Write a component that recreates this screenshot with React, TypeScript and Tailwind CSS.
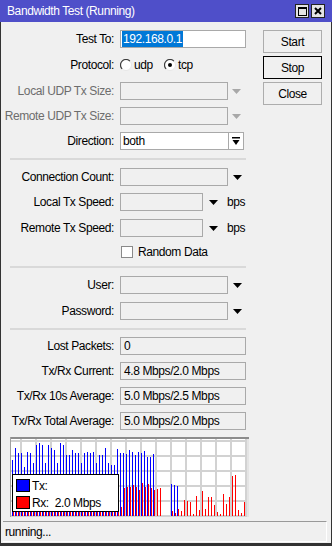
import React from "react";

const blueTops = [
  460, 448, 453, 453, 467, 452, 453, 463, 445, 443, 445, 463, 445, 448, 450, 463, 443, 445,
  455, 455, 450, 453, 453, 463, 453, 452, 453, 452, 463, 455, 455, 448, 463, 465, 465, 449,
  453, 453, 454, 450, 452, 455, 452, 453, 451, 457, 457, 454, 0, 0, 0, 0, 0, 484, 485, 486,
];

const redTops = [
  488, 487, 489, 486, 490, 487, 488, 489, 486, 487, 488, 490, 487, 486, 488, 489, 487, 488,
  486, 489, 487, 488, 490, 486, 487, 488, 489, 487, 486, 488, 487, 489, 488, 486, 487, 488,
  507, 488, 487, 487, 485, 487, 490, 483, 487, 484, 488, 490, 489, 488, 0, 0, 0, 511, 513,
  509, 511, 500, 501, 502, 514, 496, 510, 491, 509, 497, 497, 505, 512, 514, 494, 504, 497,
  476, 475, 510, 513, 502,
];

function Arrow({ gray }: { gray?: boolean }) {
  return (
    <svg width="9" height="5" viewBox="0 0 9 5">
      <path d="M0 0h9L4.5 5z" fill={gray ? "#a8a8a8" : "#000"} />
    </svg>
  );
}

function Radio({ checked }: { checked?: boolean }) {
  return (
    <svg width="12" height="12" viewBox="0 0 12 12">
      <circle cx="6" cy="6" r="5.5" fill="#fff" stroke="#e6e6e6" />
      <path d="M2.1 9.9A5.5 5.5 0 0 1 9.9 2.1" fill="none" stroke="#3c3c3c" strokeWidth="1.2" />
      {checked ? <circle cx="6" cy="6" r="2" fill="#000" /> : null}
    </svg>
  );
}

function Row({
  label,
  disabled,
  className,
  children,
}: {
  label: string;
  disabled?: boolean;
  className?: string;
  children?: React.ReactNode;
}) {
  return (
    <div className={`flex h-[18px] items-center ${className ?? ""}`}>
      <div
        className={`w-[113px] shrink-0 whitespace-nowrap text-right ${
          disabled ? "text-[#6d6d6d]" : "text-black"
        }`}
      >
        {label}
      </div>
      <div className="ml-[6px] flex h-full items-center">{children}</div>
    </div>
  );
}

function Box({ className }: { className: string }) {
  return <div className={`h-full border border-[#a9a9a9] bg-[#f0f0f0] ${className}`} />;
}

function ValueBox({ value }: { value: string }) {
  return (
    <div className="flex h-full w-[126px] items-center border border-[#a9a9a9] bg-[#f0f0f0] pl-[3px]">
      {value}
    </div>
  );
}

function Separator() {
  return <div className="ml-[9px] h-[2px] w-[236px] bg-[#d9d9d9]" />;
}

function Graph() {
  const grid = [];
  for (let k = 0; k < 16; k++) {
    grid.push(<rect key={`v${k}`} x={20 + 15 * k} y={439} width={2} height={78} fill="#d2d2d2" />);
  }
  for (let k = 0; k < 6; k++) {
    grid.push(<rect key={`h${k}`} x={11} y={440 + 15 * k} width={236} height={2} fill="#d2d2d2" />);
  }

  return (
    <div className="relative ml-[9px] mt-[7px] h-[80px] w-[239px]">
      <svg width="239" height="80" viewBox="10 437 239 80" shapeRendering="crispEdges">
        <rect x={10} y={437} width={237} height={80} fill="#fff" />
        {grid}
        {blueTops.map((top, i) =>
          top ? <rect key={`b${i}`} x={12 + 3 * i} y={top} width={1} height={516 - top} fill="#0000ff" /> : null
        )}
        {redTops.map((top, i) =>
          top ? <rect key={`r${i}`} x={13 + 3 * i} y={top} width={1} height={516 - top} fill="#ff0000" /> : null
        )}
        <rect x={10} y={437} width={239} height={2} fill="#8c8c8c" />
        <rect x={10} y={437} width={1} height={80} fill="#a0a0a0" />
        <rect x={247} y={439} width={2} height={78} fill="#e4e4e4" />
      </svg>

      <div className="absolute left-[2px] top-[37px] flex h-[38px] w-[107px] flex-col gap-[4px] border border-black bg-white pl-[3px] pt-[4px]">
        <div className="flex items-center">
          <div className="h-[13px] w-[14px] border border-black bg-[#0000ff]" />
          <span className="ml-[2px]">Tx:</span>
        </div>
        <div className="flex items-center">
          <div className="h-[13px] w-[14px] border border-black bg-[#ff0000]" />
          <span className="ml-[2px] whitespace-pre">Rx:  2.0 Mbps</span>
        </div>
      </div>
    </div>
  );
}

function Button({ label, focused }: { label: string; focused?: boolean }) {
  return (
    <div
      className={`flex h-[23px] w-[59px] items-center justify-center bg-[#f0f0f0] ${
        focused ? "border border-black" : "border border-[#adadad]"
      }`}
    >
      {label}
    </div>
  );
}

export default function App() {
  return (
    <div className="flex h-[546px] w-[332px] flex-col bg-[#f0f0f0] font-['Liberation_Sans',Arial,sans-serif] text-[12px] leading-none tracking-[-0.4px] text-black">
      <div className="flex h-[22px] shrink-0 items-center bg-[#4f4fc9] pl-[7px] pr-[7px] text-white">
        <span className="flex-1">Bandwidth Test (Running)</span>
        <div className="flex h-[14px] w-[14px] items-center justify-center border border-[#222] bg-[#e4e4e4]">
          <div className="h-[9px] w-[9px] border border-t-2 border-black" />
        </div>
        <div className="ml-[2px] flex h-[14px] w-[14px] items-center justify-center border border-[#222] bg-[#e4e4e4]">
          <svg width="8" height="8" viewBox="0 0 8 8">
            <path d="M1 1l6 6M7 1L1 7" stroke="#000" strokeWidth="2" />
          </svg>
        </div>
      </div>

      <div className="flex flex-1 flex-col border-x border-b-[3px] border-[#333]">
        <div className="flex">
          <div className="flex w-[249px] flex-col pt-[8px]">
            <Row label="Test To:">
              <div className="flex h-full w-[126px] items-center border border-[#a9a9a9] bg-white pl-[1px]">
                <span className="bg-[#0078d7] px-[1px] py-[2px] text-white">192.168.0.1</span>
              </div>
            </Row>

            <Row label="Protocol:" className="mt-[8px]">
              <div className="flex w-[44px] items-center">
                <Radio />
                <span className="ml-[2px]">udp</span>
              </div>
              <div className="flex items-center">
                <Radio checked />
                <span className="ml-[2px]">tcp</span>
              </div>
            </Row>

            <Row label="Local UDP Tx Size:" disabled className="mt-[8px]">
              <Box className="w-[108px]" />
              <div className="ml-[4px]">
                <Arrow gray />
              </div>
            </Row>

            <Row label="Remote UDP Tx Size:" disabled className="mt-[7px]">
              <Box className="w-[108px]" />
              <div className="ml-[4px]">
                <Arrow gray />
              </div>
            </Row>

            <Row label="Direction:" className="mt-[7px]">
              <div className="flex h-full w-[109px] items-center border border-[#a9a9a9] bg-white pl-[2px]">
                both
              </div>
              <div className="flex h-full w-[15px] items-center justify-center border border-l-0 border-[#a9a9a9] bg-white">
                <svg width="8" height="9" viewBox="0 0 8 9">
                  <rect x="0" y="0" width="8" height="1.5" fill="#000" />
                  <path d="M0.5 3h7L4 8z" fill="#000" />
                </svg>
              </div>
            </Row>

            <div className="mt-[8px]">
              <Separator />
            </div>

            <Row label="Connection Count:" className="mt-[8px]">
              <Box className="w-[108px]" />
              <div className="ml-[5px]">
                <Arrow />
              </div>
            </Row>

            <Row label="Local Tx Speed:" className="mt-[7px]">
              <Box className="w-[83px]" />
              <div className="ml-[6px]">
                <Arrow />
              </div>
              <span className="ml-[9px]">bps</span>
            </Row>

            <Row label="Remote Tx Speed:" className="mt-[8px]">
              <Box className="w-[83px]" />
              <div className="ml-[6px]">
                <Arrow />
              </div>
              <span className="ml-[9px]">bps</span>
            </Row>

            <div className="mt-[8px] flex h-[14px] items-center pl-[120px]">
              <div className="h-[12px] w-[12px] border border-[#8a8a8a] bg-white" />
              <span className="ml-[5px]">Random Data</span>
            </div>

            <div className="mt-[7px]">
              <Separator />
            </div>

            <Row label="User:" className="mt-[8px]">
              <Box className="w-[108px]" />
              <div className="ml-[5px]">
                <Arrow />
              </div>
            </Row>

            <Row label="Password:" className="mt-[8px]">
              <Box className="w-[108px]" />
              <div className="ml-[5px]">
                <Arrow />
              </div>
            </Row>

            <div className="mt-[8px]">
              <Separator />
            </div>

            <Row label="Lost Packets:" className="mt-[7px]">
              <ValueBox value="0" />
            </Row>
            <Row label="Tx/Rx Current:" className="mt-[7px]">
              <ValueBox value="4.8 Mbps/2.0 Mbps" />
            </Row>
            <Row label="Tx/Rx 10s Average:" className="mt-[7px]">
              <ValueBox value="5.0 Mbps/2.5 Mbps" />
            </Row>
            <Row label="Tx/Rx Total Average:" className="mt-[7px]">
              <ValueBox value="5.0 Mbps/2.0 Mbps" />
            </Row>

            <Graph />
          </div>

          <div className="ml-[13px] flex flex-col gap-[3px] pt-[8px]">
            <Button label="Start" />
            <Button label="Stop" focused />
            <Button label="Close" />
          </div>
        </div>

        <div className="mb-[1px] ml-[2px] mr-[4px] mt-[4px] flex flex-1 items-center border-t border-r border-b border-t-[#999] border-r-white border-b-white pl-[2px]">
          running...
        </div>
      </div>
    </div>
  );
}
